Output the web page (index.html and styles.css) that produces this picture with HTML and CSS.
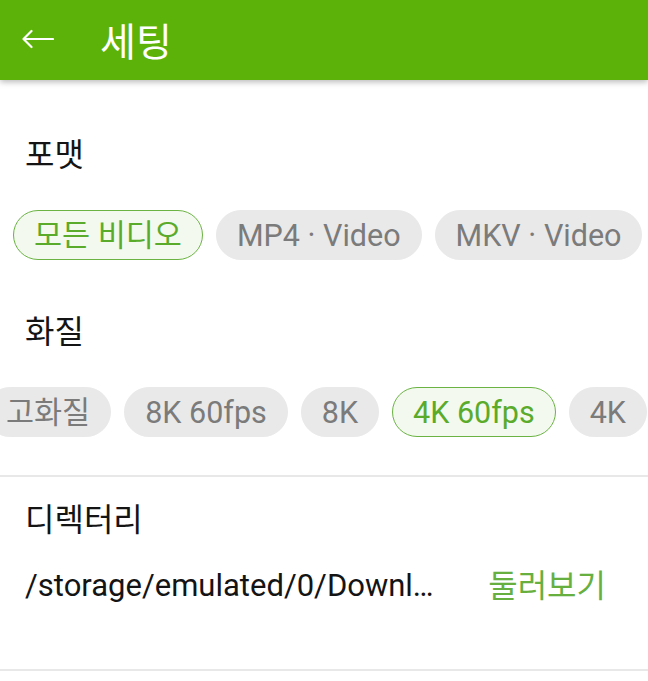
FILE: index.html
```html
<!DOCTYPE html>
<html lang="ko">
<head>
<meta charset="utf-8">
<title>세팅</title>
<link rel="stylesheet" href="styles.css">
</head>
<body>
<header class="appbar">
  <button class="back" aria-label="뒤로">
    <svg width="32" height="20" viewBox="0 0 32 20" aria-hidden="true">
      <path d="M1.5 10 H31 M1.5 10 L9.5 2 M1.5 10 L9.5 18" fill="none" stroke="#fff" stroke-width="2.2" stroke-linecap="round" stroke-linejoin="round"/>
    </svg>
  </button>
  <h1 class="title">세팅</h1>
</header>

<main class="content">
  <section class="group">
    <h2 class="label">포맷</h2>
    <div class="chips">
      <div class="chip-track">
        <span class="chip chip-on">모든 비디오</span>
        <span class="chip">MP4 · Video</span>
        <span class="chip">MKV · Video</span>
      </div>
    </div>
  </section>

  <section class="group group-quality">
    <h2 class="label">화질</h2>
    <div class="chips">
      <div class="chip-track chip-track-scrolled">
        <span class="chip">고화질</span>
        <span class="chip">8K 60fps</span>
        <span class="chip">8K</span>
        <span class="chip chip-on">4K 60fps</span>
        <span class="chip">4K</span>
      </div>
    </div>
  </section>

  <section class="dir">
    <h2 class="label">디렉터리</h2>
    <div class="dir-row">
      <span class="path">/storage/emulated/0/Downl…</span>
      <button class="browse">둘러보기</button>
    </div>
  </section>
</main>
</body>
</html>
```
FILE: styles.css
```css
* { box-sizing: border-box; }

html, body {
  margin: 0;
  padding: 0;
  background: #ffffff;
}

body {
  font-family: Roboto, "Noto Sans CJK KR", sans-serif;
  color: #141414;
  width: 648px;
  overflow: hidden;
}

.appbar {
  height: 80px;
  background: #5db20a;
  display: flex;
  align-items: center;
  padding-left: 22px;
  box-shadow: 0 2px 6px rgba(0, 0, 0, 0.28);
  position: relative;
  z-index: 1;
}

.back {
  border: 0;
  background: none;
  padding: 0;
  margin: 0;
  width: 32px;
  height: 20px;
  display: flex;
  margin-top: -2px;
}

.title {
  margin: 5px 0 0 46px;
  font-size: 39px;
  font-weight: 400;
  color: #ffffff;
  line-height: 44px;
}

.content {
  display: flex;
  flex-direction: column;
}

.group {
  padding-top: 55px;
}

.group-quality {
  padding-top: 52px;
}

.label {
  margin: 0;
  padding-left: 25px;
  font-size: 32px;
  font-weight: 400;
  line-height: 40px;
  color: #141414;
}

.chips {
  overflow: hidden;
  margin-top: 35px;
}

.chip-track {
  display: flex;
  gap: 13px;
  padding-left: 13px;
  white-space: nowrap;
}

.chip-track-scrolled {
  padding-left: 0;
  margin-left: -15px;
}

.chip {
  flex: none;
  height: 50px;
  padding: 0 20px;
  border-radius: 25px;
  background: #e9e9e9;
  border: 1.5px solid #e9e9e9;
  color: #7b7b7b;
  font-size: 30.5px;
  line-height: 47px;
  display: inline-flex;
  align-items: center;
}

.chip-on {
  background: #f3f9ee;
  border-color: #6bb444;
  color: #5aab2b;
}

.dir {
  margin-top: 38px;
  border-top: 2px solid #e8e8e8;
  border-bottom: 2px solid #e8e8e8;
  padding-top: 23px;
  height: 196px;
}

.dir-row {
  display: flex;
  align-items: center;
  justify-content: space-between;
  margin-top: 26px;
  padding-left: 25px;
  padding-right: 42px;
}

.path {
  font-size: 31px;
  line-height: 40px;
  color: #141414;
  white-space: nowrap;
  overflow: hidden;
  text-overflow: ellipsis;
  min-width: 0;
}

.browse {
  flex: none;
  border: 0;
  background: none;
  padding: 0;
  margin: 0 0 0 20px;
  font-family: inherit;
  font-size: 32px;
  line-height: 40px;
  color: #67b040;
}
```
